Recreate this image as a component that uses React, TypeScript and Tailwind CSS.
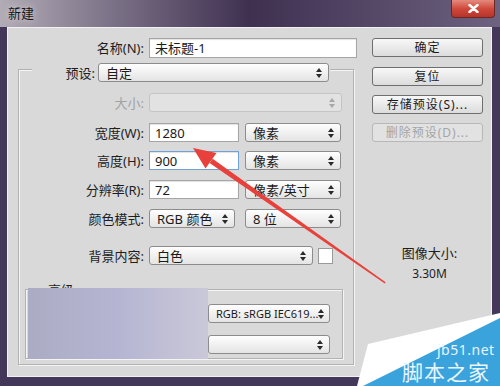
import React from 'react'

// Small up/down chevrons used on every popup menu
function Arrows({ disabled = false }: { disabled?: boolean }) {
    return (
        <svg width="6" height="10" viewBox="0 0 6 10" className="shrink-0">
            <path d="M3 0 L6 4 H0 Z M3 10 L6 6 H0 Z" fill={disabled ? '#a8a8a8' : '#2a2a2a'} />
        </svg>
    )
}

function Select({ value = '', className = '', disabled = false }: { value?: string; className?: string; disabled?: boolean }) {
    return (
        <div
            className={`flex h-[19px] items-center justify-between rounded-[3px] border pl-[7px] pr-[6px] ${
                disabled
                    ? 'border-[#c4c4c4] bg-[#e2e2e2] text-[#9a9a9a]'
                    : 'border-[#8c8c8c] bg-gradient-to-b from-[#fefefe] to-[#e4e4e4] text-[#1a1a1a]'
            } ${className}`}
        >
            <span className="whitespace-nowrap leading-[16px]">{value}</span>
            <Arrows disabled={disabled} />
        </div>
    )
}

function Input({ value, className = '', focused = false }: { value: string; className?: string; focused?: boolean }) {
    return (
        <div
            className={`flex h-[19px] items-center border bg-white pl-[5px] text-[13px] leading-[16px] text-[#1a1a1a] shadow-[inset_0_1px_1px_rgba(0,0,0,0.12)] ${
                focused ? 'border-[#6fa3d8]' : 'border-[#a5a5a5]'
            } ${className}`}
        >
            {value}
        </div>
    )
}

function Row({ label, disabled = false, className = '', children }: { label: string; disabled?: boolean; className?: string; children: React.ReactNode }) {
    return (
        <div className={`flex items-center ${className}`}>
            <div className={`w-[125px] text-right text-[13px] leading-[16px] ${disabled ? 'text-[#a2a2a2]' : 'text-[#1e1e1e]'}`}>{label}</div>
            <div className="ml-[5px] flex items-center gap-[6px]">{children}</div>
        </div>
    )
}

function Button({ label, disabled = false }: { label: string; disabled?: boolean }) {
    return (
        <div
            className={`flex h-[19px] w-[111px] items-center justify-center rounded-[3px] border text-[12px] leading-[15px] tracking-[1px] ${
                disabled
                    ? 'border-[#b8b8b8] bg-[#e2e2e2] text-[#a4a4a4]'
                    : 'border-[#6e6e6e] bg-gradient-to-b from-[#f8f8f8] to-[#dcdcdc] text-[#1a1a1a]'
            }`}
        >
            {label}
        </div>
    )
}

export default function App() {
    return (
        <div className="relative h-[386px] w-[500px] overflow-hidden bg-[#43375a] font-['Noto_Sans','Noto_Sans_CJK_SC',sans-serif]">
            <div className="flex h-full flex-col">
                {/* TITLE BAR */}
                <div className="flex h-[27px] shrink-0 items-start justify-between bg-gradient-to-r from-[#b2acb6] via-[#3f3050] to-[#6d6280]">
                    <span className="pl-[8px] pt-[5px] text-[13px] leading-[16px] text-[#161616] [text-shadow:0_0_6px_#ddd]">新建</span>
                    <div className="mr-[5px] flex h-[18px] w-[44px] items-center justify-center rounded-b-[4px] border border-t-0 border-[#6e2620] bg-gradient-to-b from-[#e48a7e] via-[#cf4a3c] to-[#b8322a]">
                        <svg width="11" height="9" viewBox="0 0 11 9">
                            <path d="M1.5 1 L9.5 8 M9.5 1 L1.5 8" stroke="#fff" strokeWidth="2.4" strokeLinecap="round" />
                        </svg>
                    </div>
                </div>

                {/* CLIENT AREA */}
                <div className="mb-[9px] ml-[7px] mr-[8px] flex flex-1 border border-[#f1f1f1] bg-[#d9d9d9]">
                    {/* LEFT: form */}
                    <div className="flex w-[349px] flex-col">
                        <div className="mt-[10px] flex items-center">
                            <div className="w-[136px] text-right text-[13px] leading-[16px] text-[#1e1e1e]">名称(N):</div>
                            <Input value="未标题-1" className="ml-[5px] h-[20px] w-[208px]" />
                        </div>

                        {/* fieldset */}
                        <div className="ml-[10px] mt-[11px] flex h-[296px] w-[336px] flex-col border border-[#b2b2b2] shadow-[inset_1px_1px_0_#f4f4f4,1px_1px_0_#f4f4f4]">
                            <div className="-mt-[7px] flex items-center">
                                <div className="w-[13px]" />
                                <div className="flex items-center bg-[#d9d9d9] pr-[1px]">
                                    <div className="w-[63px] text-right text-[13px] leading-[16px] text-[#1e1e1e]">预设:</div>
                                    <Select value="自定" className="ml-[3px] w-[231px] text-[13px]" />
                                </div>
                            </div>

                            <Row label="大小:" disabled className="mt-[11px]">
                                <Select disabled className="h-[18px] w-[193px]" />
                            </Row>
                            <Row label="宽度(W):" className="mt-[11px]">
                                <Input value="1280" className="w-[90px]" />
                                <Select value="像素" className="w-[96px] text-[13px]" />
                            </Row>
                            <Row label="高度(H):" className="mt-[9px]">
                                <Input value="900" focused className="w-[90px]" />
                                <Select value="像素" className="w-[96px] text-[13px]" />
                            </Row>
                            <Row label="分辨率(R):" className="mt-[10px]">
                                <Input value="72" className="w-[90px]" />
                                <Select value="像素/英寸" className="w-[96px] text-[13px]" />
                            </Row>
                            <Row label="颜色模式:" className="mt-[10px]">
                                <Select value="RGB  颜色" className="mr-[4px] w-[86px] text-[13px]" />
                                <Select value="8 位" className="w-[96px] text-[13px]" />
                            </Row>
                            <Row label="背景内容:" className="mt-[18px]">
                                <Select value="白色" className="w-[164px] text-[13px]" />
                                <div className="-ml-[1px] h-[16px] w-[15px] border border-[#9a9a9a] bg-white" />
                            </Row>

                            {/* advanced group */}
                            <div className="ml-[6px] mt-[24px] flex h-[70px] w-[318px] flex-col border border-[#b2b2b2] shadow-[inset_1px_1px_0_#f4f4f4,1px_1px_0_#f4f4f4]">
                                <div className="-mt-[8px] ml-[20px] w-fit bg-[#d9d9d9] px-[2px] text-[13px] leading-[16px] text-[#1e1e1e]">高级</div>
                                <div className="ml-[182px] mt-[6px] flex flex-col gap-[12px]">
                                    <Select value="RGB: sRGB IEC619..." className="h-[18px] w-[122px] pl-[3px] text-[11px]" />
                                    <Select className="h-[18px] w-[122px]" />
                                </div>
                            </div>
                        </div>
                    </div>

                    {/* RIGHT: buttons + size */}
                    <div className="flex flex-1 flex-col pl-[15px]">
                        <div className="mt-[10px]"><Button label="确定" /></div>
                        <div className="mt-[10px]"><Button label="复位" /></div>
                        <div className="mt-[9px]"><Button label="存储预设(S)..." /></div>
                        <div className="mt-[9px]"><Button label="删除预设(D)..." disabled /></div>
                        <div className="mt-[103px] flex w-[111px] flex-col items-center gap-[5px] pl-[4px] text-[13px] leading-[16px] text-[#1e1e1e]">
                            <span>图像大小:</span>
                            <span className="text-[12px]">3.30M</span>
                        </div>
                    </div>
                </div>
            </div>

            {/* OVERLAYS: blurred patch, red arrow, watermark */}
            <div className="absolute left-[28px] top-[288px] h-[71px] w-[180px] bg-gradient-to-r from-[#abacc3] via-[#b5b5d3] to-[#cac8d8]" />

            <svg className="pointer-events-none absolute left-0 top-0" width="500" height="386" viewBox="0 0 500 386">
                <polygon points="193,148 216.5,153 205.5,168.5" fill="#e8403a" />
                <polygon points="212.6,158.8 209.6,163 384.8,283.5 385.6,282.3" fill="#e8403a" />
                <polygon points="357,386 368,344 500,313 500,386" fill="#ffffff" />
                <polygon points="363,386 500,318 500,386" fill="#3ba3db" />
            </svg>

            <span className="absolute left-[437px] top-[341px] text-[14px] leading-[17px] tracking-[0.5px] text-[#e6f5ff]">jb51.net</span>
            <span className="absolute left-[402px] top-[360px] text-[21px] leading-[24px] tracking-[1px] text-[#e9f6ff]">脚本之家</span>
        </div>
    )
}
